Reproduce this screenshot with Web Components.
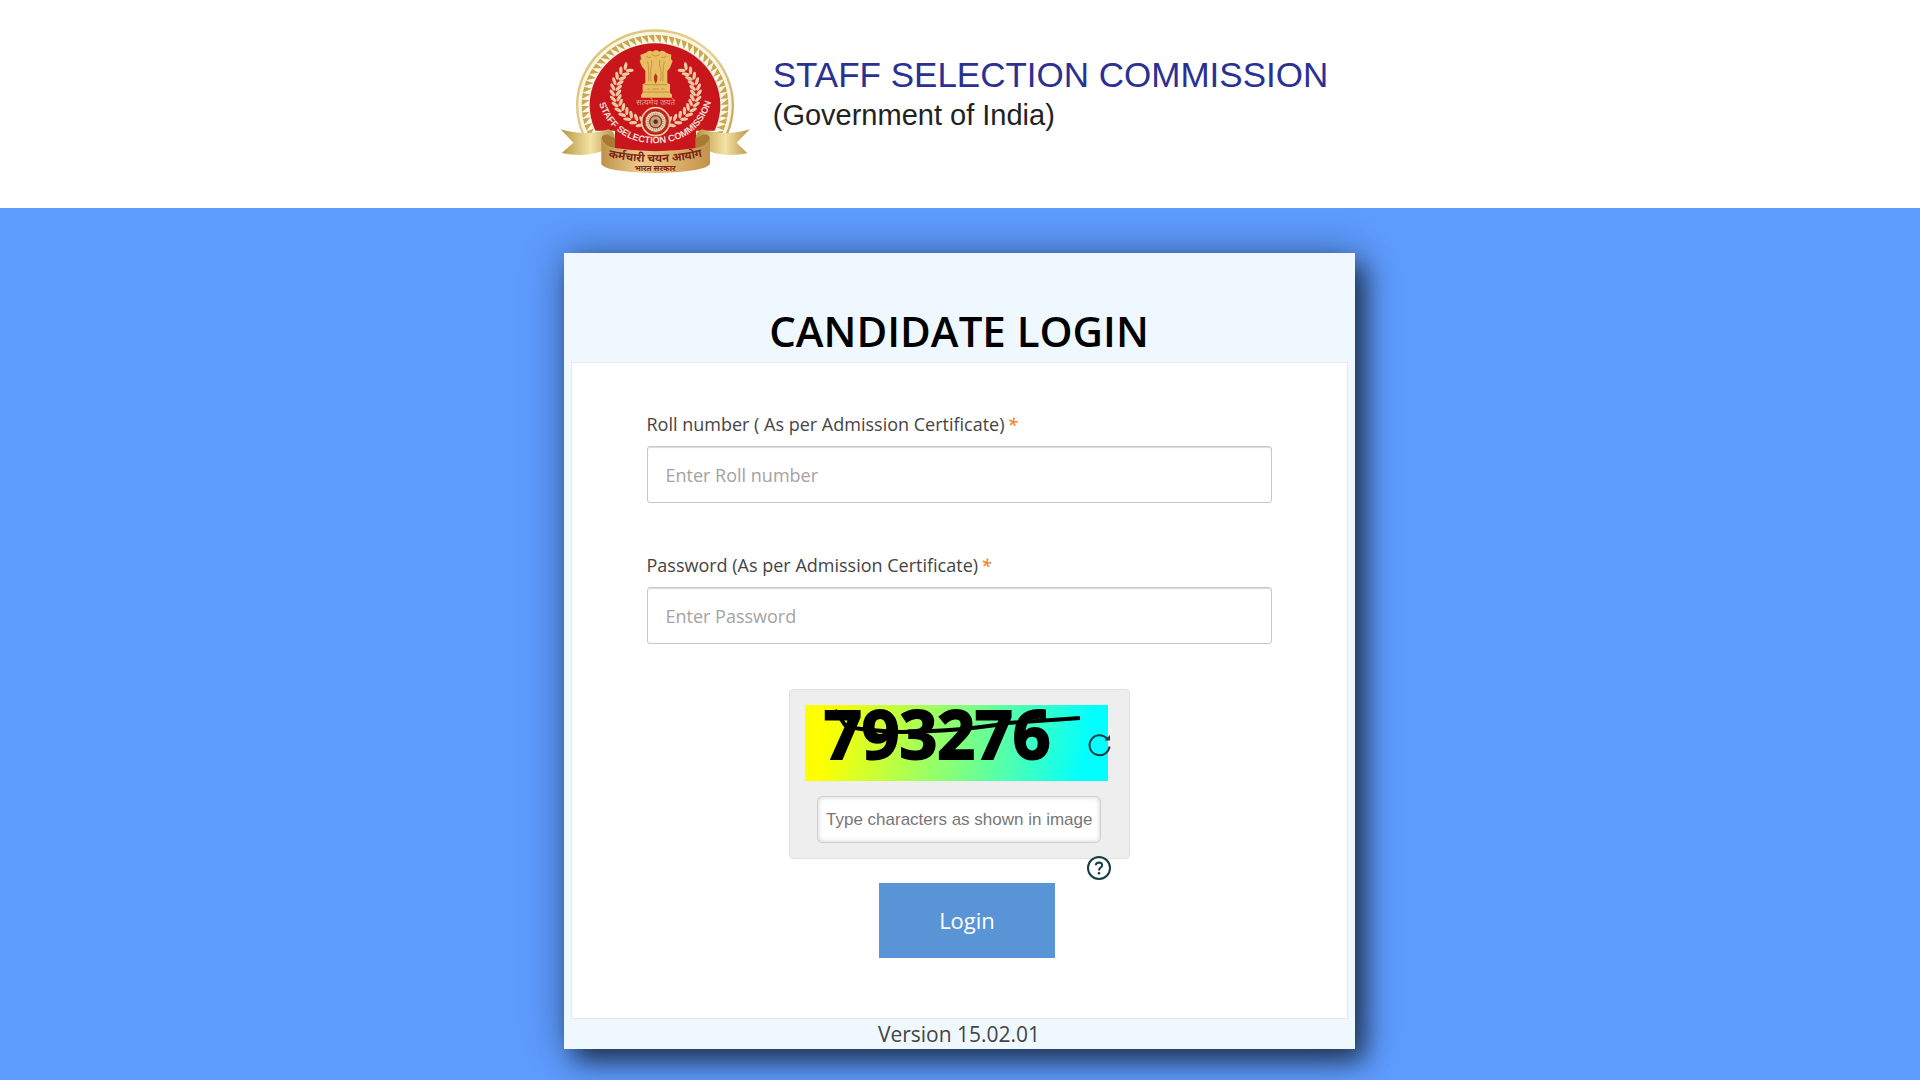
<!DOCTYPE html>
<html lang="en">
<head>
<meta charset="utf-8">
<meta name="viewport" content="width=device-width, initial-scale=1">
<title>Candidate Login</title>
<style>
  body {
    margin: 0;
    min-height: 100vh;
    background-color: #5d9bfd;
    color: #444;
    font-family: "Open Sans", "Noto Sans", sans-serif;
  }

  main {
    padding: 45px 18px 30px 16px;
  }
</style>
</head>
<body>
  <site-header>
    <ssc-emblem slot="logo"></ssc-emblem>
    STAFF SELECTION COMMISSION
    <span slot="subtitle">(Government of India)</span>
  </site-header>

  <main>
    <login-card>
      <span slot="title">CANDIDATE LOGIN</span>
      <form-field label="Roll number ( As per Admission Certificate)" placeholder="Enter Roll number" type="text"></form-field>
      <form-field label="Password (As per Admission Certificate)" placeholder="Enter Password" type="password"></form-field>
      <captcha-box code="793276"></captcha-box>
      <login-button>Login</login-button>
      <span slot="version">Version 15.02.01</span>
    </login-card>
  </main>

<script>
class SiteHeader extends HTMLElement {
  constructor() {
    super();
    this.attachShadow({ mode: 'open' });
    this.shadowRoot.innerHTML = `
      <style>
      :host {
        display: block;
        background-color: #fff;
        font-family: "Liberation Sans", Arial, sans-serif;
      }

      header {
        display: flex;
        justify-content: center;
        gap: 23px;
        padding: 29px 32px 33px 0;
      }

      .text {
        padding-top: 26px;
      }

      h1 {
        margin: 0;
        font-size: 35px;
        line-height: 40px;
        font-weight: normal;
        color: #2a3193;
      }

      p {
        margin: 0;
        font-size: 29px;
        line-height: 40px;
        color: #222;
      }
      </style>
      <header>
        <slot name="logo"></slot>
        <div class="text">
          <h1><slot></slot></h1>
          <p><slot name="subtitle"></slot></p>
        </div>
      </header>
    `;
  }
}

class SscEmblem extends HTMLElement {
  constructor() {
    super();
    this.attachShadow({ mode: 'open' });
    this.render();
  }

  // gold sawtooth between the cream rim and the red disc
  teeth() {
    let d = '';
    const count = 68;
    for (let i = 0; i < count; i++) {
      const a = (i / count) * Math.PI * 2;
      const b = ((i + 0.9) / count) * Math.PI * 2;
      const p = (t, rx, ry) => `${(345 + rx * Math.cos(t)).toFixed(1)} ${(286 + ry * Math.sin(t)).toFixed(1)}`;
      d += `M${p(a, 220, 211)}L${p(b, 220, 211)}L${p(b, 197, 187)}Z`;
    }
    return d;
  }

  // one branch of the wreath, the other side is mirrored
  leaves() {
    let out = '';
    for (let i = 0; i < 13; i++) {
      const deg = 112 + i * 9.5;
      const t = deg * Math.PI / 180;
      const x = 347 + 122 * Math.cos(t);
      const y = 246 + 100 * Math.sin(t);
      out += `<ellipse cx="${(x - 10 * Math.cos(t)).toFixed(1)}" cy="${(y - 10 * Math.sin(t)).toFixed(1)}" rx="12" ry="5" transform="rotate(${deg + 130} ${(x - 10 * Math.cos(t)).toFixed(1)} ${(y - 10 * Math.sin(t)).toFixed(1)})"/>`;
      out += `<ellipse cx="${(x + 8 * Math.cos(t)).toFixed(1)}" cy="${(y + 8 * Math.sin(t)).toFixed(1)}" rx="12" ry="5" transform="rotate(${deg + 55} ${(x + 8 * Math.cos(t)).toFixed(1)} ${(y + 8 * Math.sin(t)).toFixed(1)})"/>`;
    }
    return out;
  }

  spokes() {
    let d = '';
    for (let i = 0; i < 24; i++) {
      const t = i * Math.PI / 12;
      d += `M${(347 + 8 * Math.cos(t)).toFixed(1)} ${(335 + 8 * Math.sin(t)).toFixed(1)}L${(347 + 27 * Math.cos(t)).toFixed(1)} ${(335 + 27 * Math.sin(t)).toFixed(1)}`;
    }
    return d;
  }

  render() {
    const leaves = this.leaves();
    this.shadowRoot.innerHTML = `
      <style>
      :host {
        display: block;
        flex: none;
      }

      svg {
        display: block;
        width: 190px;
        height: 146px;
      }
      </style>
      <svg viewBox="60 57 570 438" role="img" aria-label="Staff Selection Commission emblem">
        <defs>
          <linearGradient id="rim" x1="0" x2="1" y1="0" y2="1">
            <stop offset="0" stop-color="#d9bd6e"/>
            <stop offset=".5" stop-color="#e6d091"/>
            <stop offset="1" stop-color="#b98f3d"/>
          </linearGradient>
          <linearGradient id="band" x1="0" x2="1">
            <stop offset="0" stop-color="#bd9247"/>
            <stop offset=".35" stop-color="#eccb8c"/>
            <stop offset=".6" stop-color="#e2b873"/>
            <stop offset="1" stop-color="#c3924c"/>
          </linearGradient>
          <linearGradient id="tail" x1="0" x2="1">
            <stop offset="0" stop-color="#b8923f"/>
            <stop offset=".55" stop-color="#f3e3a4"/>
            <stop offset="1" stop-color="#b99247"/>
          </linearGradient>
          <clipPath id="upper"><path d="M60 50H630V395H60Z"/></clipPath>
          <clipPath id="disc"><path d="M60 50H630V362H468V425H225V362H60Z"/></clipPath>
          <path id="motto" d="M171 255C188 346 255 400 345 400C437 400 502 346 519 250"/>
          <path id="hindi" d="M190 438Q348 476 502 436"/>
        </defs>
        <g clip-path="url(#upper)">
          <ellipse cx="345" cy="286" rx="237" ry="228" fill="url(#rim)"/>
          <ellipse cx="345" cy="286" rx="230" ry="221" fill="#f8f6e2"/>
          <path d="${this.teeth()}" fill="#c8a751"/>
        </g>
        <g clip-path="url(#disc)">
          <ellipse cx="345" cy="286" rx="196" ry="186" fill="#c9161d"/>
          <rect x="225" y="350" width="243" height="80" fill="#c9161d"/>
        </g>
        <g fill="#ecc9a0">${leaves}</g>
        <g fill="#ecc9a0" transform="translate(694 0) scale(-1 1)">${leaves}</g>
        <g fill="#e9bd62">
          <path d="M318 128q10-10 20-3q10-8 20 0q11-7 20 3l16 6l-1 13l5 6l-8 20l-8 10v36l8 4v25l6 6v9H303v-9l5-6v-25l8-4v-37l-10-12l-7-16l4-7l-2-12z"/>
        </g>
        <g fill="none" stroke="#b9812f" stroke-width="2">
          <path d="M318 138q8 8 15 3M364 141q8 5 15-3M334 134q13 9 26 0M323 154q4 18 3 60M373 154q-5 18-4 60M335 150v18q-5 10-2 46M359 150v18q6 10 3 46M312 224H383M309 246H389"/>
          <path d="M323 237h8m6 0h20m7 0h10"/>
        </g>
        <path d="M347 190q-11 13 0 31q11-18 0-31z" fill="#ad3a21"/>
        <text x="347" y="286" text-anchor="middle" font-family="'Noto Sans Devanagari', 'Noto Sans', sans-serif" font-size="24" fill="#eaa080">सत्यमेव जयते</text>
        <circle cx="347" cy="335" r="42" fill="#c9161d" stroke="#edcda2" stroke-width="5"/>
        <circle cx="347" cy="335" r="32" fill="#ead3ad" stroke="#9c442b" stroke-width="3"/>
        <path d="${this.spokes()}" stroke="#b07355" stroke-width="2"/>
        <circle cx="347" cy="335" r="18" fill="none" stroke="#8e4031" stroke-width="4"/>
        <circle cx="347" cy="335" r="7" fill="#5c2624"/>
        <text font-family="'Liberation Sans', Arial, sans-serif" font-weight="bold" font-size="28" fill="#f7dfd0">
          <textPath href="#motto" startOffset="50%" text-anchor="middle">STAFF SELECTION COMMISSION</textPath>
        </text>
        <path d="M62 358Q138 381 205 358Q226 366 225 386V415H186V424Q130 443 65 429L100 398Z" fill="url(#tail)"/>
        <path d="M629 358Q555 381 486 358Q466 366 467 386V415H508V424Q560 443 622 430L590 398Z" fill="url(#tail)"/>
        <path d="M184 384Q193 412 225 414V386L205 374Q188 372 184 384ZM510 384Q500 412 467 414V386L487 374Q505 372 510 384Z" fill="#a77b35"/>
        <path d="M184 384Q187 408 225 414Q347 434 467 414Q505 408 510 384V462Q506 472 467 480Q347 500 225 480Q188 473 184 462Z" fill="url(#band)"/>
        <text font-family="'Noto Sans Devanagari', 'Noto Sans', sans-serif" font-weight="bold" font-size="34" fill="#7e2416">
          <textPath href="#hindi" startOffset="50%" text-anchor="middle">कर्मचारी चयन आयोग</textPath>
        </text>
        <text x="345" y="482" text-anchor="middle" font-family="'Noto Sans Devanagari', 'Noto Sans', sans-serif" font-weight="bold" font-size="24" fill="#7e2416">भारत सरकार</text>
      </svg>
    `;
  }
}

class LoginCard extends HTMLElement {
  constructor() {
    super();
    this.attachShadow({ mode: 'open' });
    this.shadowRoot.innerHTML = `
      <style>
      :host {
        display: block;
        box-sizing: border-box;
        max-width: 791px;
        margin: 0 auto;
        padding: 0 7px;
        background-color: #f0f8ff;
        box-shadow: 10px 12px 24px rgba(0, 0, 0, 0.6), 0 0 40px rgba(0, 0, 0, 0.3);
      }

      h2 {
        margin: 0;
        padding: 48px 0 1px;
        font-size: 42px;
        line-height: 60px;
        font-weight: 600;
        text-align: center;
        color: #000;
      }

      form {
        display: flex;
        flex-direction: column;
        gap: 49px;
        padding: 48px 75px 60px;
        border: 1px solid #e3e9ee;
        background-color: #fff;
      }

      footer {
        font-size: 21px;
        line-height: 30px;
        text-align: center;
      }
      </style>
      <h2><slot name="title"></slot></h2>
      <form>
        <slot></slot>
      </form>
      <footer><slot name="version"></slot></footer>
    `;
  }
}

class FormField extends HTMLElement {
  constructor() {
    super();
    this.attachShadow({ mode: 'open' });
    this.render();
  }

  render() {
    const label = this.getAttribute('label');
    const placeholder = this.getAttribute('placeholder');
    const type = this.getAttribute('type');

    this.shadowRoot.innerHTML = `
      <style>
      :host {
        display: block;
      }

      label {
        display: block;
        margin-bottom: 9px;
        font-size: 18px;
        line-height: 26px;
      }

      i {
        margin-left: 3px;
        color: #f5822a;
        font-weight: 600;
      }

      input {
        display: block;
        box-sizing: border-box;
        width: 100%;
        height: 57px;
        padding: 0 18px;
        border: 1px solid #c8c8c8;
        border-radius: 3px;
        background-color: #fff;
        box-shadow: inset 0 1px 1px rgba(0, 0, 0, 0.15);
        color: #444;
        font-family: inherit;
        font-size: 18px;
      }

      input::placeholder {
        color: #a3a3a3;
      }
      </style>
      <label for="field">${label}<i>*</i></label>
      <input id="field" type="${type}" placeholder="${placeholder}" required>
    `;
  }
}

class CaptchaBox extends HTMLElement {
  constructor() {
    super();
    this.attachShadow({ mode: 'open' });
    this.render();
  }

  render() {
    const code = this.getAttribute('code');

    this.shadowRoot.innerHTML = `
      <style>
      :host {
        display: flex;
        flex-direction: column;
        gap: 15px;
        position: relative;
        box-sizing: border-box;
        align-self: center;
        width: 341px;
        margin-top: -4px;
        padding: 15px;
        border: 1px solid #e0e0e0;
        border-radius: 4px;
        background-color: #eee;
      }

      .picture {
        position: relative;
        width: 303px;
      }

      .picture svg {
        display: block;
        overflow: visible;
        width: 303px;
        height: 76px;
        background: linear-gradient(100deg, #ff0 8%, #7fff7f 52%, #0ff 92%);
      }

      button {
        position: absolute;
        width: 24px;
        height: 24px;
        padding: 0;
        border: 0;
        background: none;
        cursor: pointer;
      }

      button svg {
        display: block;
        width: 24px;
        height: 24px;
      }

      .refresh {
        right: -4px;
        top: 28px;
      }

      .picture .refresh svg {
        width: 24px;
        height: 24px;
        background: none;
      }

      .help {
        right: 18px;
        bottom: -22px;
      }

      input {
        box-sizing: border-box;
        width: 284px;
        height: 47px;
        align-self: center;
        padding: 0 8px;
        border: 1px solid #ccd0d2;
        border-radius: 5px;
        background-color: #fff;
        box-shadow: inset 0 0 5px rgba(0, 0, 0, 0.2);
        font-family: "Liberation Sans", Arial, sans-serif;
        font-size: 17px;
      }

      input::placeholder {
        color: #777;
      }
      </style>
      <div class="picture">
        <svg viewBox="0 0 303 76" role="img" aria-label="Captcha">
          <text x="19" y="54" font-family="'Open Sans', sans-serif" font-weight="bold" font-size="66" stroke="#000" stroke-width="2">${code}</text>
          <path d="M30 5L40 20Q48 25 97 27Q160 26 202 18L275 13" fill="none" stroke="#000" stroke-width="4"/>
        </svg>
        <button class="refresh" type="button" aria-label="Refresh captcha">
          <svg viewBox="0 0 24 24" fill="none" stroke="#163c46" stroke-width="2">
            <path d="M21.500 13.500A10 10 0 1 1 19 5.500"/>
            <path d="M22 2V7.500H16.500Z" fill="#163c46" stroke="none"/>
          </svg>
        </button>
      </div>
      <input type="text" placeholder="Type characters as shown in image" aria-label="Type characters as shown in image">
      <button class="help" type="button" aria-label="Help">
        <svg viewBox="0 0 24 24" fill="none" stroke="#163c46" stroke-width="2">
          <circle cx="12" cy="12" r="11"/>
          <path d="M8.800 9.200Q9 6.400 12 6.400Q15.200 6.500 15.200 9.300Q15.200 10.700 13.600 11.700Q12 12.700 12 14.500"/>
          <circle cx="12" cy="17.300" r="1.300" fill="#163c46" stroke="none"/>
        </svg>
      </button>
    `;
  }
}

class LoginButton extends HTMLElement {
  constructor() {
    super();
    this.attachShadow({ mode: 'open' });
    this.shadowRoot.innerHTML = `
      <style>
      :host {
        display: flex;
        justify-content: center;
        margin-top: -25px;
        padding-left: 16px;
      }

      button {
        padding: 22px 60px 23px;
        border: 0;
        background-color: #5994d6;
        color: #fff;
        font-family: inherit;
        font-size: 22px;
        line-height: 30px;
        cursor: pointer;
      }
      </style>
      <button type="button"><slot></slot></button>
    `;
  }
}

customElements.define('site-header', SiteHeader);
customElements.define('ssc-emblem', SscEmblem);
customElements.define('login-card', LoginCard);
customElements.define('form-field', FormField);
customElements.define('captcha-box', CaptchaBox);
customElements.define('login-button', LoginButton);
</script>
</body>
</html>
